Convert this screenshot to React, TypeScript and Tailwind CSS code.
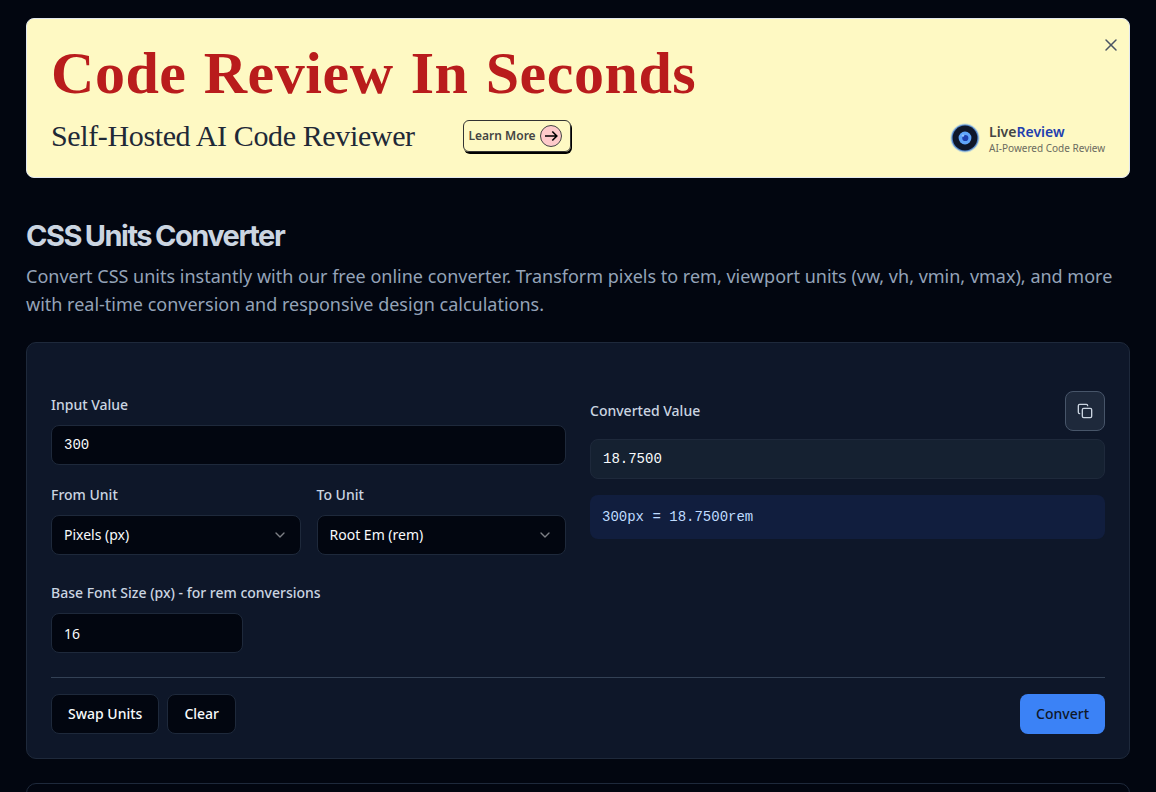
import React, { useState } from 'react';
import { ChevronDown, Copy, X } from 'lucide-react';

const fieldClass =
  'flex h-10 w-full items-center rounded-lg border border-[#1e293b] bg-[#020610] px-3 text-sm text-slate-50';
const labelClass = 'text-sm font-medium leading-5 text-[#cbd5e1]';

function LiveReviewLogo() {
  return (
    <svg width="32" height="32" viewBox="0 0 32 32" aria-hidden="true">
      <circle cx="16" cy="16" r="14.6" fill="#60a5fa" opacity="0.35" />
      <circle cx="16" cy="16" r="13.6" fill="#3b76cc" opacity="0.8" />
      <circle cx="16" cy="16" r="12.4" fill="#0f172a" />
      <circle cx="16" cy="16" r="6.4" fill="#60a5fa" />
      <circle cx="16.3" cy="16" r="3.1" fill="#1e40af" />
      <circle cx="14" cy="13.6" r="1.2" fill="#93c5fd" />
    </svg>
  );
}

function Banner() {
  return (
    <section className="relative h-40 rounded-lg border border-[#e2e8f0] bg-[#fef9c3] px-6 pt-6">
      <h2 className="h-[60px] whitespace-nowrap font-['Liberation_Serif',serif] text-[60px] font-bold leading-[60px] tracking-[0.55px] text-[#b91c1c] [word-spacing:1.6px]">
        Code Review In Seconds
      </h2>
      <div className="mt-[13px] flex h-10 items-center">
        <p className="w-[364px] whitespace-nowrap font-['Liberation_Serif',serif] text-[30px] leading-9 tracking-[-0.37px] text-[#1f2937]">
          Self-Hosted AI Code Reviewer
        </p>
        <button className="ml-12 flex h-8 w-[108px] items-center gap-1 rounded-md border border-[#333] pl-[4.5px] text-xs font-semibold text-[#444] shadow-[1px_2px_0_0_#000]">
          <span className="whitespace-nowrap">Learn More</span>
          <svg width="22" height="22" viewBox="0 0 22 22" fill="none">
            <circle cx="11" cy="11" r="10.5" fill="#fecaca" stroke="#444" />
            <path d="M5 11h12M12.3 6.5L16.8 11l-4.500 4.500" stroke="#000" strokeWidth="1.6" />
          </svg>
        </button>
        <div className="ml-auto mt-1 flex items-center gap-2">
          <LiveReviewLogo />
          <div className="w-[116px] whitespace-nowrap pt-1">
            <div className="text-sm font-semibold leading-[17px] text-[#444]">
              Live<span className="text-[#1e40af]">Review</span>
            </div>
            <div className="text-[10px] leading-[17px] text-[#6b6b60]">AI-Powered Code Review</div>
          </div>
        </div>
      </div>
      <button className="absolute right-2 top-4 text-[#4b5563]" aria-label="Close">
        <X size={20} strokeWidth={1.8} />
      </button>
    </section>
  );
}

function UnitSelect({ label, value }: { label: string; value: string }) {
  return (
    <div className="min-w-0 flex-1">
      <div className={labelClass}>{label}</div>
      <button className={`${fieldClass} mt-2.5 justify-between`}>
        <span>{value}</span>
        <ChevronDown size={16} className="text-slate-50 opacity-50" />
      </button>
    </div>
  );
}

export default function App() {
  const [value, setValue] = useState('300');
  const [base, setBase] = useState('16');
  const result = (Number(value) / (Number(base) || 16)).toFixed(4);

  return (
    <main className="h-[792px] overflow-hidden bg-[#020610] px-[26px] pt-[18px] font-['Noto_Sans',sans-serif]">
      <Banner />
      <h1 className="mt-10 whitespace-nowrap font-['Inter',sans-serif] text-[29px] font-bold leading-9 tracking-[-1.5px] text-[#cbd5e1] [word-spacing:-1.5px]">
        CSS Units Converter
      </h1>
      <p className="mt-2 text-lg leading-7 text-[#94a3b8]">
        Convert CSS units instantly with our free online converter. Transform pixels to rem, viewport units (vw, vh, vmin,
        vmax), and more with real-time conversion and responsive design calculations.
      </p>

      <section className="mt-6 h-[417px] rounded-[10px] border border-[#1e293b] bg-[#0e1729] px-6 pt-12">
        <div className="grid grid-cols-2 gap-6">
          <div>
            <div className={`${labelClass} mt-1`}>Input Value</div>
            <input
              className={`${fieldClass} mt-2.5 font-['Liberation_Mono',monospace]`}
              value={value}
              onChange={(e) => setValue(e.target.value)}
            />
            <div className="mt-5 flex gap-4">
              <UnitSelect label="From Unit" value="Pixels (px)" />
              <UnitSelect label="To Unit" value="Root Em (rem)" />
            </div>
            <div className={`${labelClass} mt-7`}>Base Font Size (px) - for rem conversions</div>
            <div className="mt-2.5 w-48">
              <input className={fieldClass} value={base} onChange={(e) => setBase(e.target.value)} />
            </div>
          </div>
          <div>
            <div className="flex items-center justify-between">
              <span className={labelClass}>Converted Value</span>
              <button
                className="flex size-10 items-center justify-center rounded-lg border border-[#475569] bg-[#1e293b] text-[#cbd5e1]"
                aria-label="Copy"
              >
                <Copy size={16} />
              </button>
            </div>
            <div className="mt-2 flex h-10 items-center rounded-lg border border-[#1e293b] bg-[#152131] px-3 font-['Liberation_Mono',monospace] text-sm text-slate-50">
              {result}
            </div>
            <div className="mt-4 flex h-11 items-center rounded-lg bg-[#111e3e] px-3 font-['Liberation_Mono',monospace] text-sm text-[#bfdbfe]">
              {value}px = {result}rem
            </div>
          </div>
        </div>
        <div className="mt-6 flex items-center gap-2 border-t border-[#334155] pt-4 text-sm font-medium">
          <button className="h-10 rounded-lg border border-[#1e293b] bg-[#020610] px-4 text-slate-50">Swap Units</button>
          <button className="h-10 rounded-lg border border-[#1e293b] bg-[#020610] px-4 text-slate-50">Clear</button>
          <button className="ml-auto h-10 rounded-lg bg-[#3b82f6] px-4 text-[#0f1729]">Convert</button>
        </div>
      </section>
      <section className="mt-6 h-40 rounded-[10px] border border-[#1e293b]" />
    </main>
  );
}
